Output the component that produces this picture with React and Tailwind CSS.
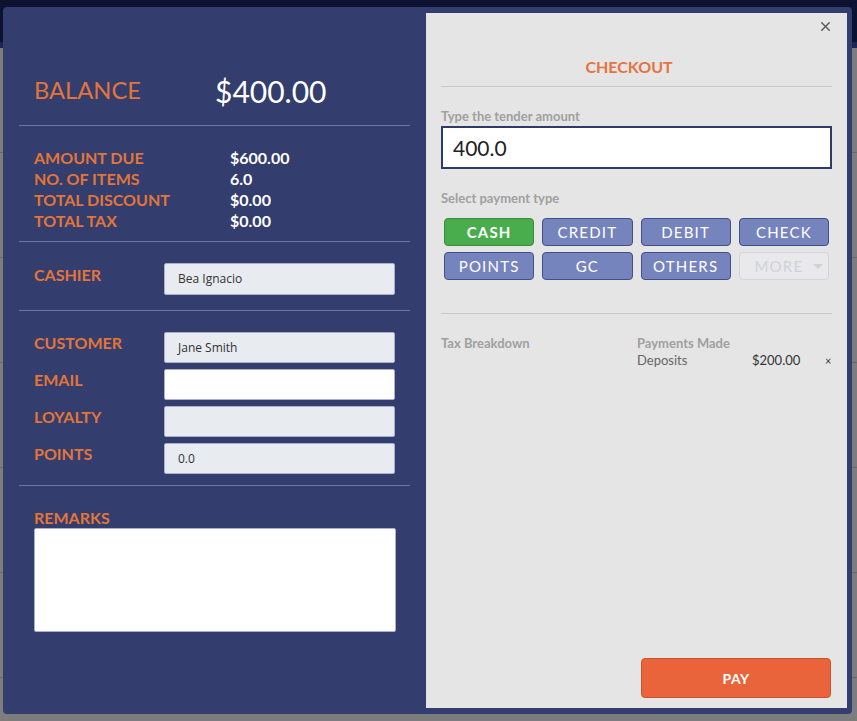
import { X } from 'lucide-react';

const stats = [
  ['AMOUNT DUE', '$600.00'],
  ['NO. OF ITEMS', '6.0'],
  ['TOTAL DISCOUNT', '$0.00'],
  ['TOTAL TAX', '$0.00'],
];

const customerFields = [
  { label: 'CUSTOMER', value: 'Jane Smith', bg: 'bg-[#e8ebef]' },
  { label: 'EMAIL', value: '', bg: 'bg-white' },
  { label: 'LOYALTY', value: '', bg: 'bg-[#e8ebef]' },
  { label: 'POINTS', value: '0.0', bg: 'bg-[#e8ebef]' },
];

const payTypes = ['CASH', 'CREDIT', 'DEBIT', 'CHECK', 'POINTS', 'GC', 'OTHERS'];

function Field({ label, value, bg }) {
  return (
    <div className="flex items-start">
      <div className="w-[130px] mt-[2px] text-[16px] leading-[18px] font-bold text-[#e27538]">{label}</div>
      <div
        className={`w-[231px] h-[31px] ${bg} border border-[#a9b1cc] rounded-[2px] flex items-center pl-[13px] text-[12px] text-[#333]`}
        style={{ fontFamily: '"Open Sans", sans-serif' }}
      >
        {value}
      </div>
    </div>
  );
}

function PayButton({ label, active }) {
  return (
    <button
      className={`h-[28px] rounded-[4px] border text-[15px] tracking-[0.08em] text-white leading-none ${
        active ? 'bg-[#49ad4d] border-[#3a8c3e] font-bold' : 'bg-[#7584bd] border-[#434f88]'
      }`}
    >
      {label}
    </button>
  );
}

export default function App() {
  return (
    <div className="relative w-[857px] h-[721px] overflow-hidden bg-[#7d7d7d]" style={{ fontFamily: 'Lato, "Noto Sans", sans-serif' }}>
      {/* dimmed page behind the modal */}
      <div className="h-[42px] bg-[#0c1230]" />
      <div className="h-[6px] bg-[#1c2553]" />
      <div className="flex flex-col">
        {[0, 1, 2, 3, 4, 5, 6].map(i => (
          <div key={i} className="h-[105px] border-b border-[#6a6a6a]" />
        ))}
      </div>

      {/* modal */}
      <div className="absolute left-[3px] top-[7px] w-[849px] h-[707px] bg-[#333d6e] rounded-[4px] flex">
        {/* left side */}
        <div className="w-[423px] px-[16px] flex flex-col">
          <div className="mt-[64px] h-[40px] px-[15px] flex items-center">
            <div className="w-[181px] text-[23.7px] text-[#e27538]">BALANCE</div>
            <div className="text-[30px] text-white">$400.00</div>
          </div>
          <div className="mt-[14px] h-px bg-[#6c78aa]" />

          <div className="pt-[21px] px-[15px]">
            {stats.map(([k, v]) => (
              <div key={k} className="flex h-[21px] items-center text-[16px] font-bold">
                <div className="w-[196px] text-[#e27538]">{k}</div>
                <div className="text-white">{v}</div>
              </div>
            ))}
          </div>
          <div className="mt-[10px] h-px bg-[#6c78aa]" />

          <div className="pt-[21px] px-[15px]">
            <div className="flex items-start">
              <div className="w-[130px] mt-[3px] text-[16px] leading-[18px] font-bold text-[#e27538]">CASHIER</div>
              <div
                className="w-[231px] h-[32px] bg-[#e8ebef] border border-[#a9b1cc] rounded-[2px] flex items-center pl-[13px] text-[12px] text-[#333]"
                style={{ fontFamily: '"Open Sans", sans-serif' }}
              >
                Bea Ignacio
              </div>
            </div>
          </div>
          <div className="mt-[15px] h-px bg-[#6c78aa]" />

          <div className="pt-[21px] px-[15px] flex flex-col gap-[6px]">
            {customerFields.map(f => (
              <Field key={f.label} {...f} />
            ))}
          </div>
          <div className="mt-[11px] h-px bg-[#6c78aa]" />

          <div className="pt-[23px] px-[15px]">
            <div className="text-[16px] leading-[18px] font-bold text-[#e27538]">REMARKS</div>
            <textarea className="mt-[1px] w-[362px] h-[104px] bg-white border border-[#a9b1cc] rounded-[2px] resize-none block" />
          </div>
        </div>

        {/* right side */}
        <div className="relative flex-1 mt-[6px] mb-[6px] mr-[5px] bg-[#e5e5e5] px-[15px] flex flex-col">
          <button className="absolute top-[6px] right-[14px] text-[#555]">
            <X size={15} strokeWidth={2.2} />
          </button>
          <div className="mt-[45px] pr-[15px] text-center text-[16px] font-bold text-[#e5733d] leading-[18px]">CHECKOUT</div>
          <div className="mt-[10px] h-px bg-[#c9c9cd]" />

          <div className="mt-[21px] text-[13px] font-bold text-[#a0a0a0] leading-[16px]">Type the tender amount</div>
          <div className="mt-[2px] h-[43px] bg-white border-2 border-[#2f3a68] flex items-center pl-[10px] text-[21px] text-[#222]">
            400.0
          </div>

          <div className="mt-[21px] text-[13px] font-bold text-[#a0a0a0] leading-[16px]">Select payment type</div>
          <div className="mt-[12px] pl-[3px] pr-[3px] grid grid-cols-4 gap-x-[8px] gap-y-[6px]">
            {payTypes.map(p => (
              <PayButton key={p} label={p} active={p === 'CASH'} />
            ))}
            <button className="h-[28px] rounded-[4px] border border-[#d3d4dc] bg-[#e9e9ec] text-[15px] tracking-[0.08em] text-[#d0d1d9] flex items-center justify-center gap-[10px] pl-[10px]">
              MORE
              <span className="w-0 h-0 border-l-[5px] border-r-[5px] border-t-[5px] border-l-transparent border-r-transparent border-t-[#d0d1d9]" />
            </button>
          </div>

          <div className="mt-[33px] h-px bg-[#c9c9cd]" />

          <div className="mt-[21px] flex">
            <div className="w-[196px] text-[13px] font-bold text-[#a0a0a0] leading-[16px]">Tax Breakdown</div>
            <div className="flex-1">
              <div className="text-[13px] font-bold text-[#a0a0a0] leading-[16px]">Payments Made</div>
              <div className="mt-[1px] flex items-center text-[13px] leading-[17px]">
                <div className="w-[115px] text-[#666]">Deposits</div>
                <div className="w-[73px] text-[#333]">$200.00</div>
                <div className="text-[11px] text-[#333]">×</div>
              </div>
            </div>
          </div>

          <div className="flex-1" />
          <div className="mb-[10px] flex justify-end pr-[1px]">
            <button className="w-[190px] h-[40px] rounded-[4px] bg-[#e9643a] border border-[#c9532c] text-white font-bold text-[14px] tracking-[0.03em]">
              PAY
            </button>
          </div>
        </div>
      </div>
    </div>
  );
}
